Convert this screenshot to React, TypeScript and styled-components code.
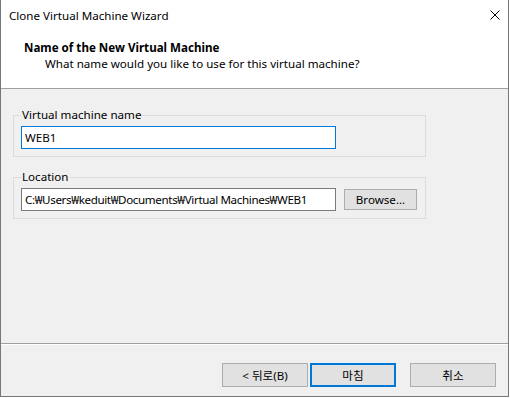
import React from 'react';
import styled, { createGlobalStyle } from 'styled-components';

const GlobalStyle = createGlobalStyle`
  html, body {
    margin: 0;
    background: #ffffff;
  }

  body {
    font-family: 'Noto Sans', 'Noto Sans CJK KR', sans-serif;
    font-size: 11.6px;
    color: #000000;
  }
`;

const Window = styled.div`
  box-sizing: border-box;
  display: flex;
  flex-direction: column;
  width: 509px;
  height: 397px;
  border: 1px solid #777777;
  border-top: none;
  background: #f0f0f0;
`;

const Header = styled.header`
  box-sizing: border-box;
  height: 89px;
  background: #ffffff;
  border-bottom: 1px solid #a0a0a0;
`;

const TitleBar = styled.div`
  display: flex;
  align-items: center;
  justify-content: space-between;
  height: 30px;
  padding: 0 8px;
`;

const CloseIcon = styled.svg`
  width: 10px;
  height: 10px;
`;

const Banner = styled.div`
  padding: 11px 0 0 23px;
`;

const BannerTitle = styled.div`
  font-weight: 700;
  line-height: 14px;
`;

const BannerText = styled.div`
  margin-top: 2px;
  line-height: 14px;
  padding-left: 21px;
`;

const Body = styled.main`
  flex: 1;
  display: flex;
  flex-direction: column;
  gap: 14px;
  padding: 20px 0 0 12px;
`;

const Group = styled.fieldset`
  box-sizing: border-box;
  width: 413px;
  min-width: 0;
  margin: 0;
  padding: 5px 6px 7px 7px;
  border: 1px solid #dcdcdc;
`;

const Legend = styled.legend`
  padding: 0 1px;
  line-height: 12px;
`;

const Row = styled.div`
  display: flex;
  align-items: center;
  gap: 8px;
`;

const TextBox = styled.input<{ $focused?: boolean; $tight?: boolean }>`
  box-sizing: border-box;
  width: 315px;
  height: 23px;
  margin: 0;
  padding: 0 3px;
  border: 1px solid ${(p) => (p.$focused ? '#0078d7' : '#7a7a7a')};
  background: #ffffff;
  font: inherit;
  letter-spacing: ${(p) => (p.$tight ? '-0.36px' : 'normal')};
  color: #000000;
  outline: none;
`;

const Button = styled.button<{ $default?: boolean; $small?: boolean }>`
  box-sizing: border-box;
  width: ${(p) => (p.$small ? '73px' : '86px')};
  height: ${(p) => (p.$small ? '21px' : '24px')};
  margin: 0;
  padding: 0;
  background: #e1e1e1;
  border: ${(p) => (p.$default ? '2px solid #0078d7' : '1px solid #adadad')};
  font: inherit;
  color: #000000;
`;

const Footer = styled.footer`
  box-sizing: border-box;
  display: flex;
  justify-content: flex-end;
  align-items: flex-start;
  gap: 2px;
  height: 53px;
  padding: 19px 12px 0 0;
  border-top: 1px solid #a0a0a0;
  box-shadow: inset 0 1px 0 #ffffff;
`;

const CancelButton = styled(Button)`
  margin-left: 12px;
`;

const App = () => {
  return (
    <Window>
      <GlobalStyle />
      <Header>
        <TitleBar>
          <span>Clone Virtual Machine Wizard</span>
          <CloseIcon viewBox="0 0 10 10">
            <path d="M0.5 0.5 L9.5 9.5 M9.5 0.5 L0.5 9.5" stroke="#000" strokeWidth="1" fill="none" />
          </CloseIcon>
        </TitleBar>
        <Banner>
          <BannerTitle>Name of the New Virtual Machine</BannerTitle>
          <BannerText>What name would you like to use for this virtual machine?</BannerText>
        </Banner>
      </Header>

      <Body>
        <Group>
          <Legend>Virtual machine name</Legend>
          <TextBox $focused defaultValue="WEB1" />
        </Group>
        <Group>
          <Legend>Location</Legend>
          <Row>
            <TextBox $tight defaultValue="C:₩Users₩keduit₩Documents₩Virtual Machines₩WEB1" />
            <Button $small>Browse...</Button>
          </Row>
        </Group>
      </Body>

      <Footer>
        <Button>&lt; 뒤로(B)</Button>
        <Button $default>마침</Button>
        <CancelButton>취소</CancelButton>
      </Footer>
    </Window>
  );
};

export default App;
